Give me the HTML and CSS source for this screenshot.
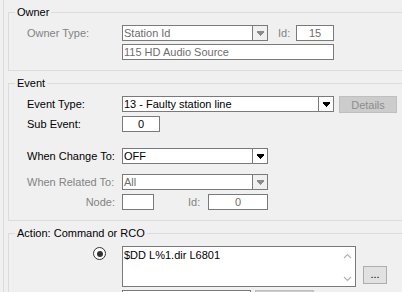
FILE: index.html
```html
<!DOCTYPE html>
<html lang="en">

<head>
    <meta charset="UTF-8">
    <meta name="viewport" content="width=device-width, initial-scale=1.0">
    <title>Event Action</title>
    <link rel="stylesheet" href="styles.css">
</head>

<body>
    <div class="panel">
        <!-- owner -->
        <div class="group">
            <span class="caption">Owner</span>
            <div class="row">
                <span class="label dim">Owner Type:</span>
                <div class="combo off w146">
                    <span class="combo-text">Station Id</span>
                    <span class="combo-btn"><svg width="7" height="5" viewBox="0 0 7 5" shape-rendering="crispEdges"><path d="M0 0h7v2H6v1H5v1H4v1H3V4H2V3H1V2H0z" fill="currentColor"/></svg></span>
                </div>
                <span class="id-label dim">Id:</span>
                <div class="box off center w38">15</div>
            </div>
            <div class="row mt3">
                <div class="box off w212 indent">115 HD Audio Source</div>
            </div>
        </div>

        <!-- event -->
        <div class="group">
            <span class="caption">Event</span>
            <div class="row">
                <span class="label">Event Type:</span>
                <div class="combo w212">
                    <span class="combo-text">13 - Faulty station line</span>
                    <span class="combo-btn"><svg width="7" height="5" viewBox="0 0 7 5" shape-rendering="crispEdges"><path d="M0 0h7v2H6v1H5v1H4v1H3V4H2V3H1V2H0z" fill="currentColor"/></svg></span>
                </div>
                <button class="btn-details">Details</button>
            </div>
            <div class="row mt4">
                <span class="label">Sub Event:</span>
                <div class="box center w38">0</div>
            </div>
            <div class="row mt16">
                <span class="label">When Change To:</span>
                <div class="combo w146">
                    <span class="combo-text">OFF</span>
                    <span class="combo-btn"><svg width="7" height="5" viewBox="0 0 7 5" shape-rendering="crispEdges"><path d="M0 0h7v2H6v1H5v1H4v1H3V4H2V3H1V2H0z" fill="currentColor"/></svg></span>
                </div>
            </div>
            <div class="row mt10">
                <span class="label dim">When Related To:</span>
                <div class="combo off w146">
                    <span class="combo-text">All</span>
                    <span class="combo-btn"><svg width="7" height="5" viewBox="0 0 7 5" shape-rendering="crispEdges"><path d="M0 0h7v2H6v1H5v1H4v1H3V4H2V3H1V2H0z" fill="currentColor"/></svg></span>
                </div>
            </div>
            <div class="row mt4">
                <span class="label right dim">Node:</span>
                <div class="box off w32"></div>
                <span class="node-id dim">Id:</span>
                <div class="box off center w60">0</div>
            </div>
        </div>

        <!-- action -->
        <div class="group">
            <span class="caption">Action: Command or RCO</span>
            <div class="action-row">
                <span class="radio-cell"><span class="radio"></span></span>
                <div class="memo">
                    <span class="memo-text">$DD L%1.dir L6801</span>
                    <span class="memo-scroll">
                        <svg width="9" height="6" viewBox="0 0 9 6"><path d="M1 5l3.5-3.5L8 5" fill="none" stroke="#b4b4b4" stroke-width="1.2"/></svg>
                        <svg width="9" height="6" viewBox="0 0 9 6"><path d="M1 1l3.5 3.5L8 1" fill="none" stroke="#b4b4b4" stroke-width="1.2"/></svg>
                    </span>
                </div>
                <button class="btn-more">...</button>
            </div>
            <div class="row mt3">
                <div class="box w129 indent"></div>
                <span class="btn-grey"></span>
            </div>
        </div>
    </div>
</body>
</html>
```

FILE: styles.css
```css
body {
    margin: 0;
    height: 292px;
    overflow: hidden;
    background-color: #f0f0f0;
    font-family: "Liberation Sans", Arial, sans-serif;
    font-size: 11px;
    color: #000;
}

.panel {
    margin-left: 3px;
    border-left: 1px solid #dcdcdc;
    padding: 12px 0 0 4px;
    height: 280px;
    overflow: hidden;
}

.group {
    position: relative;
    width: 520px;
    border: 1px solid #dcdcdc;
    padding: 12px 0 10px 18px;
    margin-bottom: 12px;
}

.caption {
    position: absolute;
    top: -7px;
    left: 6px;
    padding: 0 2px;
    line-height: 13px;
    background-color: #f0f0f0;
}

.row {
    display: flex;
    align-items: center;
    height: 16px;
}

.mt3 { margin-top: 3px; }
.mt4 { margin-top: 4px; }
.mt10 { margin-top: 10px; }
.mt16 { margin-top: 16px; }

.label {
    width: 95px;
    flex: none;
    white-space: nowrap;
}

.label.right {
    text-align: right;
    width: 88px;
    padding-right: 7px;
}

.dim {
    color: #838383;
}

.indent {
    margin-left: 95px;
}

.box, .combo {
    box-sizing: border-box;
    height: 16px;
    border: 1px solid #7a7a7a;
    background-color: #fff;
    line-height: 14px;
    padding-left: 1px;
    white-space: nowrap;
    overflow: hidden;
}

.box.off, .combo.off {
    color: #6d6d6d;
}

.center {
    text-align: center;
    padding-left: 0;
}

.w32 { width: 32px; }
.w38 { width: 38px; }
.w60 { width: 60px; }
.w129 { width: 129px; }
.w146 { width: 146px; }
.w212 { width: 212px; }

.combo {
    display: flex;
}

.combo-text {
    flex: 1;
}

.combo-btn {
    width: 14px;
    border-left: 1px solid #7a7a7a;
    display: flex;
    align-items: center;
    justify-content: center;
    color: #000;
}

.combo.off .combo-btn {
    background-color: #f0f0f0;
    color: #8c8c8c;
}

.id-label {
    width: 18px;
    padding-left: 10px;
}

.node-id {
    box-sizing: border-box;
    width: 54px;
    padding-left: 34px;
}

.btn-details {
    box-sizing: border-box;
    align-self: flex-start;
    margin-left: 5px;
    width: 58px;
    height: 17px;
    padding: 0;
    border: 1px solid #bfbfbf;
    background-color: #cccccc;
    color: #8d8d8d;
    font: inherit;
}

.action-row {
    display: flex;
    align-items: flex-start;
}

.radio-cell {
    width: 95px;
    flex: none;
    padding-top: 1px;
}

.radio {
    display: block;
    box-sizing: border-box;
    width: 13px;
    height: 13px;
    margin-left: 66px;
    border: 1px solid #333;
    border-radius: 50%;
    background-color: #fff;
    position: relative;
}

.radio::after {
    content: "";
    position: absolute;
    left: 2.5px;
    top: 2.5px;
    width: 6px;
    height: 6px;
    border-radius: 50%;
    background-color: #333;
}

.memo {
    box-sizing: border-box;
    display: flex;
    width: 234px;
    height: 41px;
    border: 1px solid #7a7a7a;
    background-color: #fff;
}

.memo-text {
    flex: 1;
    padding: 2px 0 0 1px;
    line-height: 13px;
}

.memo-scroll {
    width: 16px;
    display: flex;
    flex-direction: column;
    align-items: center;
    justify-content: space-between;
    padding: 6px 0 4px;
}

.btn-more {
    box-sizing: border-box;
    align-self: flex-end;
    margin: 0 0 3px 7px;
    width: 24px;
    height: 18px;
    padding: 0 0 3px;
    border: 1px solid #adadad;
    background-color: #e1e1e1;
    color: #000;
    font: inherit;
}

.btn-grey {
    box-sizing: border-box;
    align-self: flex-start;
    margin-left: 4px;
    width: 59px;
    height: 18px;
    border: 1px solid #bfbfbf;
    background-color: #cccccc;
}
```
